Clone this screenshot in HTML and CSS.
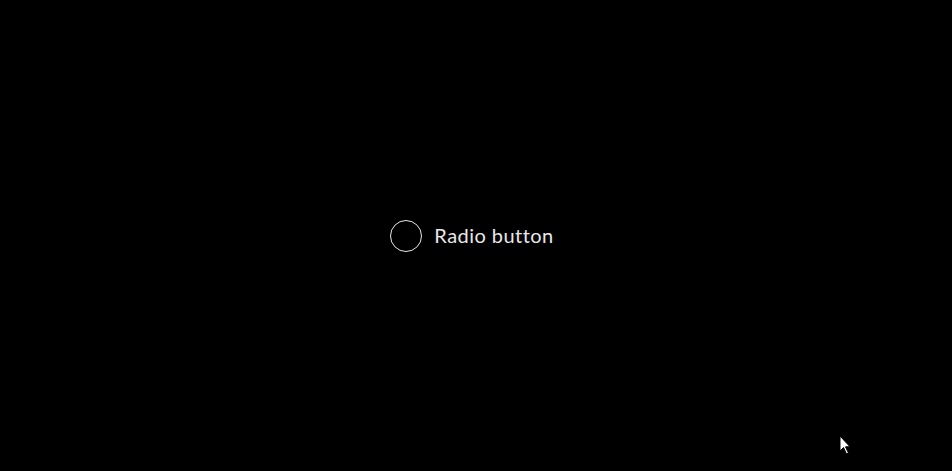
FILE: index.html
```html
<!DOCTYPE html>
<html>
<head>
<meta charset="utf-8">
<link rel="stylesheet" href="styles.css">
</head>
<body>
<main class="stage">
  <label class="radio">
    <input type="radio" class="radio-input" name="r">
    <span class="radio-circle"></span>
    <span class="radio-label">Radio button</span>
  </label>
</main>
<svg class="cursor" width="14" height="22" viewBox="0 0 14 22">
  <path d="M1 1 L1 16 L4.5 12.5 L7.5 19 L9.5 18 L6.5 11.8 L11 11.8 Z" fill="#fff" stroke="#000" stroke-width="1"/>
</svg>
</body>
</html>
```
FILE: styles.css
```css
html, body {
  margin: 0;
  padding: 0;
  background: #000;
  height: 100%;
}
.stage {
  height: 100vh;
  display: flex;
  align-items: center;
  justify-content: center;
  padding-right: 8px;
  box-sizing: border-box;
}
.radio {
  display: flex;
  align-items: center;
  gap: 12px;
  cursor: pointer;
}
.radio-input {
  display: none;
}
.radio-circle {
  width: 30px;
  height: 30px;
  border: 1px solid #e6e6e6;
  border-radius: 50%;
  box-sizing: content-box;
}
.radio-label {
  font-family: "Lato", "Open Sans", sans-serif;
  font-size: 20px;
  color: #e8e8e8;
  letter-spacing: 0.45px;
  line-height: 1;
  margin-bottom: 2px;
}
.cursor {
  position: absolute;
  left: 839px;
  top: 435px;
}
```
